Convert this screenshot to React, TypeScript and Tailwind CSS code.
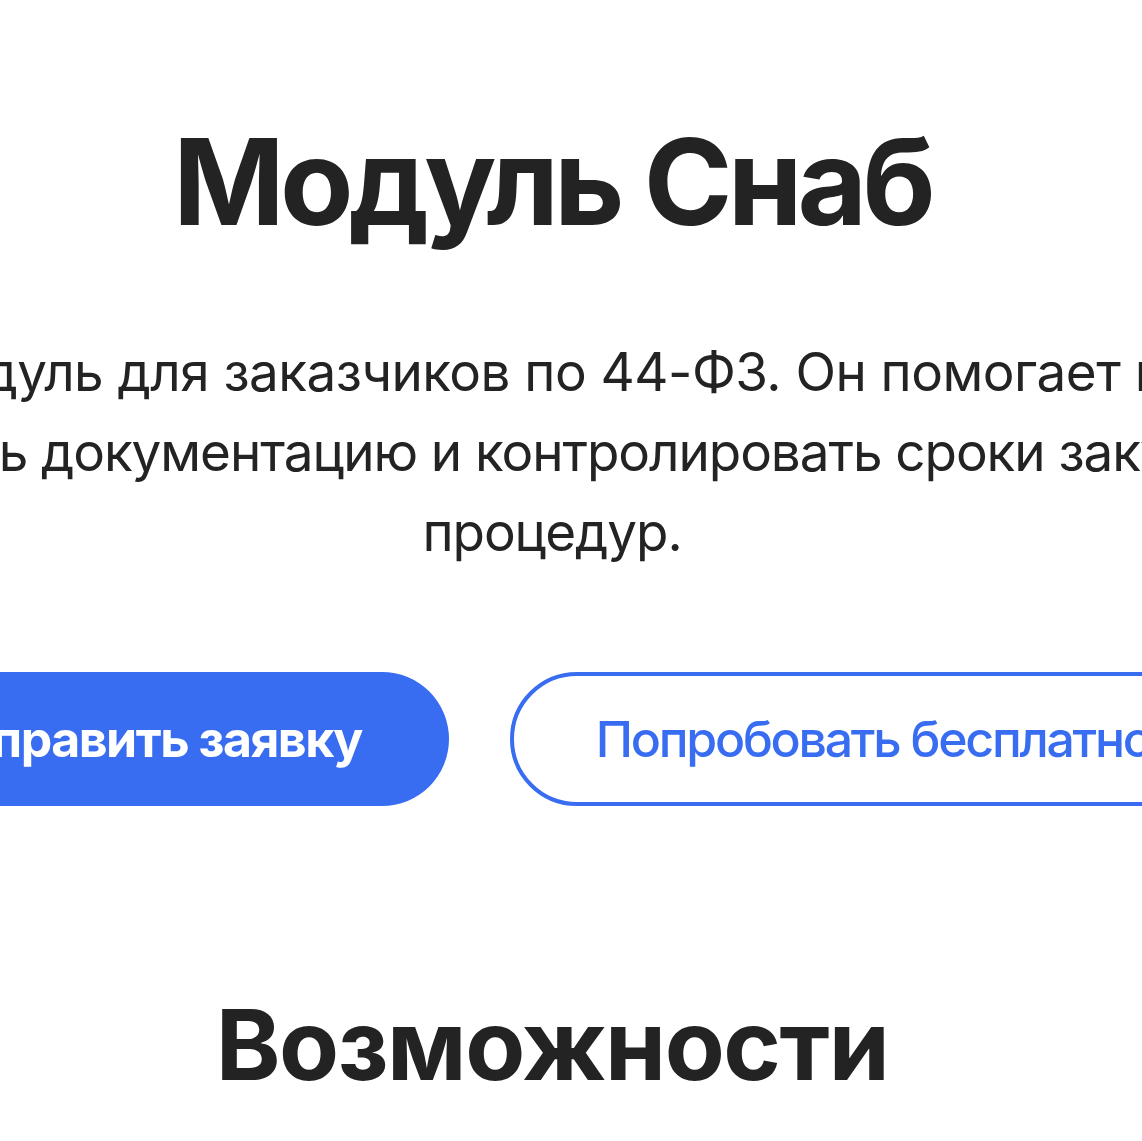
export default function App() {
  return (
    <div className="min-h-screen w-full overflow-hidden bg-white font-['Inter',sans-serif] text-[#232323]">
      <main className="flex flex-col items-center pr-[38px]">
        {/* Hero */}
        <section className="flex flex-col items-center pt-[122px]">
          <h1 className="whitespace-nowrap text-[120px] font-bold leading-none tracking-[-0.04em]">
            Модуль Снаб
          </h1>

          <p className="mt-[90px] flex flex-col items-center text-[53px] leading-[80px] tracking-[-0.02em]">
            <span className="whitespace-nowrap tracking-[-0.01em]">
              «Снаб» — модуль для заказчиков по 44-ФЗ. Он помогает планировать
            </span>
            <span className="whitespace-nowrap">
              оформлять документацию и контролировать сроки закупочных
            </span>
            <span className="whitespace-nowrap">процедур.</span>
          </p>

          <div className="mt-[100px] flex items-center gap-[61px]">
            <button className="h-[134px] whitespace-nowrap rounded-full bg-[#386df2] px-[87px] text-[50px] font-bold tracking-[-0.03em] text-white">
              Отправить заявку
            </button>
            <button className="h-[134px] whitespace-nowrap rounded-full border-4 border-[#386df2] bg-white pl-[82px] pr-[106px] text-[50px] font-medium tracking-[-0.045em] text-[#386df2]">
              Попробовать бесплатно
            </button>
          </div>
        </section>

        {/* Features */}
        <section className="flex flex-col items-center pt-[190px] pb-[120px]">
          <h2 className="whitespace-nowrap text-[98px] font-bold leading-none tracking-[-0.015em]">
            Возможности
          </h2>
        </section>
      </main>
    </div>
  );
}
